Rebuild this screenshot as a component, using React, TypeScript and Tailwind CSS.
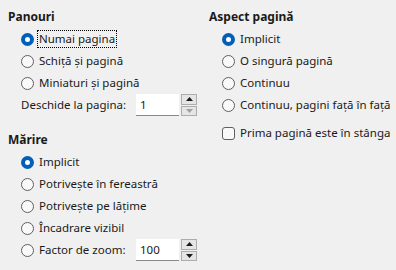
import React from "react";

const font = { fontFamily: '"Noto Sans", "Open Sans", sans-serif' };

function Radio({ checked, label, focused }: { checked?: boolean; label: string; focused?: boolean }) {
  return (
    <div className="flex h-[22px] items-center whitespace-nowrap">
      {checked ? (
        <span className="flex h-[13px] w-[13px] shrink-0 items-center justify-center rounded-full bg-[#005fb8]">
          <span className="h-[5px] w-[5px] rounded-full bg-white" />
        </span>
      ) : (
        <span className="h-[13px] w-[13px] shrink-0 rounded-full border border-[#5f5f5f] bg-[#f9f9f9]" />
      )}
      <span
        className={
          focused
            ? "ml-[3px] border border-dotted border-black px-[1px] leading-[16px]"
            : "ml-[5px] leading-[16px]"
        }
      >
        {label}
      </span>
    </div>
  );
}

function Spin({ value, downDisabled }: { value: string; downDisabled?: boolean }) {
  return (
    <div className="flex h-[22px] items-stretch">
      <div className="flex w-[43px] items-center border-b border-[#8a8a8a] bg-white pl-[4px]">{value}</div>
      <div className="ml-[2px] flex w-[16px] flex-col gap-[1px]">
        <div className="flex flex-1 items-center justify-center border border-[#adadad] bg-[#e5e5e5]">
          <svg width="7" height="4" viewBox="0 0 7 4">
            <path d="M0 4 L3.5 0 L7 4 Z" fill="#1a1a1a" />
          </svg>
        </div>
        <div className="flex flex-1 items-center justify-center border border-[#adadad] bg-[#e5e5e5]">
          <svg width="7" height="4" viewBox="0 0 7 4">
            <path d="M0 0 L3.5 4 L7 0 Z" fill={downDisabled ? "#a0a0a0" : "#1a1a1a"} />
          </svg>
        </div>
      </div>
    </div>
  );
}

export default function App() {
  return (
    <div className="flex h-[270px] w-[396px] bg-[#f0f0f0] text-[11.5px] text-[#1a1a1a]" style={font}>
      <div className="w-[201px] pl-[8px] pt-[7px]">
        <div className="h-[21px] text-[12px] font-bold leading-[20px]">Panouri</div>
        <div className="pl-[13px]">
          <Radio checked focused label="Numai pagina" />
          <Radio label="Schiță și pagină" />
          <Radio label="Miniaturi și pagină" />
          <div className="flex h-[22px] items-center">
            <span className="w-[115px] whitespace-nowrap">Deschide la pagina:</span>
            <Spin value="1" downDisabled />
          </div>
        </div>
        <div className="mt-[13px] h-[22px] text-[12px] font-bold leading-[22px]">Mărire</div>
        <div className="pl-[13px]">
          <Radio checked label="Implicit" />
          <Radio label="Potrivește în fereastră" />
          <Radio label="Potrivește pe lățime" />
          <Radio label="Încadrare vizibil" />
          <div className="flex h-[22px] items-center">
            <div className="w-[115px]">
              <Radio label="Factor de zoom:" />
            </div>
            <Spin value="100" />
          </div>
        </div>
      </div>
      <div className="flex-1 pl-[8px] pt-[7px]">
        <div className="h-[21px] text-[12px] font-bold leading-[20px]">Aspect pagină</div>
        <div className="pl-[13px]">
          <Radio checked label="Implicit" />
          <Radio label="O singură pagină" />
          <Radio label="Continuu" />
          <Radio label="Continuu, pagini față în față" />
          <div className="mt-[6px] flex h-[22px] items-center whitespace-nowrap">
            <span className="h-[13px] w-[13px] rounded-[3px] border border-[#5f5f5f] bg-[#f9f9f9]" />
            <span className="ml-[5px]">Prima pagină este în stânga</span>
          </div>
        </div>
      </div>
    </div>
  );
}
